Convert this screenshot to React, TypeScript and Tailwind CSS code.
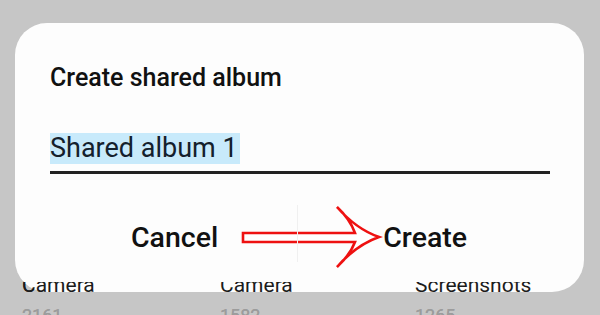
const albums = [
  { name: "Camera", count: "2161", w: "w-[198px]" },
  { name: "Camera", count: "1582", w: "w-[195px]" },
  { name: "Screenshots", count: "1265", w: "w-[170px]" },
];

const AlbumRow = () => (
  <div className="flex pl-[22px]">
    {albums.map((a, i) => (
      <div key={i} className={`${a.w} flex flex-col`}>
        <span className="text-[21px] leading-[24px] text-[#1c1c1c]">{a.name}</span>
        <span className="text-[18px] leading-[22px] mt-[8px] text-[#9c9c9c]">{a.count}</span>
      </div>
    ))}
  </div>
);

const Arrow = () => (
  <svg width="142" height="66" viewBox="240 205 142 66" className="overflow-visible">
    <path
      d="M243 233 L355 233 Q350 219 337 207 Q356 229 379 237 Q356 245 337 267 Q350 255 355 242 L243 242 Z"
      fill="#ffffff"
      stroke="#ee1111"
      strokeWidth="2.6"
      strokeLinejoin="miter"
    />
  </svg>
);

export default function App() {
  return (
    <div className="relative w-[600px] h-[315px] overflow-hidden bg-[#c6c6c6] font-['Roboto',sans-serif]">
      <div className="pt-[273px]">
        <AlbumRow />
      </div>

      {/* dialog */}
      <div className="absolute left-[15px] top-[23px] w-[569px] h-[269px] rounded-[32px] bg-[#fdfdfd] flex flex-col pl-[35px] pr-[34px]">
        <h2 className="mt-[40px] text-[25px] leading-[30px] font-medium text-[#111]">Create shared album</h2>
        <div className="mt-[40px] border-b-[3px] border-[#222] pb-[7px]">
          <span className="inline-block bg-[#c8eafb] text-[27px] leading-[31px] text-[#14202c] pr-[2px]">
            Shared album 1
          </span>
        </div>
        <div className="relative mt-[31px] flex items-center">
          <span className="ml-[81px] text-[28.5px] leading-[32px] font-medium text-[#111]">Cancel</span>
          <div className="ml-[22px]">
            <Arrow />
          </div>
          <span className="ml-[1px] text-[28.5px] leading-[32px] font-medium text-[#111]">Create</span>
          <div className="absolute left-[247px] top-0 w-px h-[57px] bg-[#f0f0f0]" />
        </div>
      </div>

      {/* labels peeking over the dialog's bottom edge */}
      <div className="absolute left-0 top-[273px] w-full [clip-path:inset(9px_0_0_0)]">
        <AlbumRow />
      </div>
    </div>
  );
}
